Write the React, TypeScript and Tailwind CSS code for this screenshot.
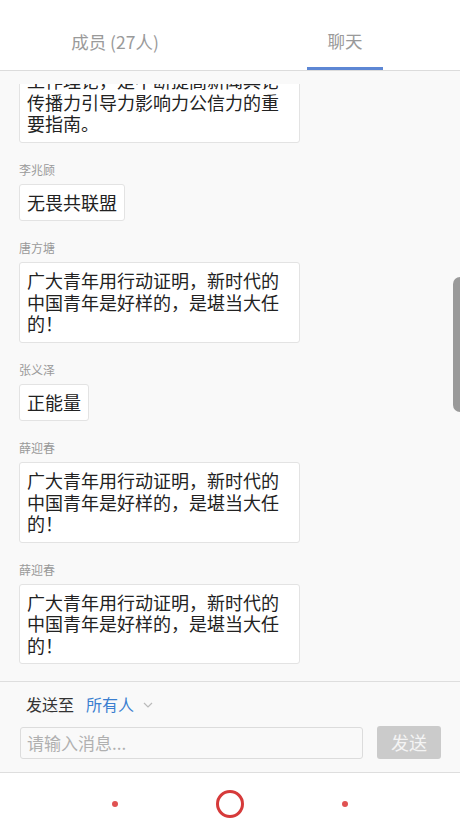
import React from 'react'

type Msg = { name?: string; text: string; first?: boolean }

const FONT = '"Noto Sans CJK SC", "Noto Sans", sans-serif'

const messages: Msg[] = [
  { text: '工作理论，是不断提高新闻舆论传播力引导力影响力公信力的重要指南。', first: true },
  { name: '李兆顾', text: '无畏共联盟' },
  { name: '唐方塘', text: '广大青年用行动证明，新时代的中国青年是好样的，是堪当大任的！' },
  { name: '张义泽', text: '正能量' },
  { name: '薛迎春', text: '广大青年用行动证明，新时代的中国青年是好样的，是堪当大任的！' },
  { name: '薛迎春', text: '广大青年用行动证明，新时代的中国青年是好样的，是堪当大任的！' },
]

function Bubble({ msg }: { msg: Msg }) {
  return (
    <div className="flex flex-col items-start">
      {msg.name && (
        <div className="mt-[18px] mb-[6px] text-[12px] leading-[17px] text-[#999]">{msg.name}</div>
      )}
      <div
        className={[
          'max-w-[281px] rounded-[3px] border border-[#e3e3e3] bg-white px-[7px] py-[7px] text-[18px] leading-[21.5px] text-[#222]',
          msg.first ? 'mt-[-22px]' : '',
        ].join(' ')}
      >
        {msg.text}
      </div>
    </div>
  )
}

export default function App() {
  return (
    <div className="relative flex h-[835px] w-[460px] flex-col overflow-hidden bg-white" style={{ fontFamily: FONT }}>
      {/* tabs */}
      <div className="flex h-[71px] shrink-0 border-b border-[#dcdcdc] bg-white">
        <div className="flex flex-1 items-center justify-center pt-[14px] text-[17.5px] text-[#9a9a9a]">
          成员 (27人)
        </div>
        <div className="flex flex-1 flex-col items-center justify-end">
          <div className="mb-[13px] text-[17.5px] text-[#9a9a9a]">聊天</div>
          <div className="h-[3px] w-[76px] bg-[#5d87d4]" />
        </div>
      </div>

      {/* chat */}
      <div className="flex min-h-0 flex-1 flex-col bg-[#f9f9f9] pt-[13px]">
        <div className="min-h-0 flex-1 overflow-hidden px-[19px]">
          {messages.map((m, i) => (
            <Bubble key={i} msg={m} />
          ))}
        </div>
      </div>

      {/* input bar */}
      <div className="h-[92px] shrink-0 border-y border-[#dedede] bg-[#f9f9f9] pl-[20px] pr-[19px] pt-[11px]">
        <div className="flex items-center pl-[6px] text-[16px] leading-[22px]">
          <span className="text-[#333]">发送至</span>
          <span className="ml-[12px] text-[#3b7fd0]">所有人</span>
          <svg className="ml-[9px] mt-[1px]" width="10" height="6" viewBox="0 0 10 6" fill="none">
            <path d="M1 1l4 4 4-4" stroke="#bbb" strokeWidth="1.2" />
          </svg>
        </div>
        <div className="mt-[11px] flex items-end gap-[14px]">
          <div className="flex h-[32px] flex-1 items-center rounded-[3px] border border-[#dcdcdc] bg-[#f9f9f9] px-[6px] text-[17px] text-[#b0b0b0]">
            请输入消息...
          </div>
          <div className="flex h-[33px] w-[64px] items-center justify-center rounded-[3px] bg-[#cbcbcb] text-[18px] text-[#f4f4f4]">
            发送
          </div>
        </div>
      </div>

      {/* nav bar */}
      <div className="flex h-[62px] shrink-0 items-center justify-center gap-[98px] bg-white">
        <span className="h-[6px] w-[6px] rounded-full bg-[#e05252]" />
        <span className="h-[28px] w-[28px] rounded-full border-[3px] border-[#d63a3a]" />
        <span className="h-[6px] w-[6px] rounded-full bg-[#e05252]" />
      </div>

      {/* edge handle */}
      <div className="absolute right-0 top-[277px] h-[135px] w-[7px] rounded-l-[8px] bg-[#9a9a9a]" />
    </div>
  )
}
